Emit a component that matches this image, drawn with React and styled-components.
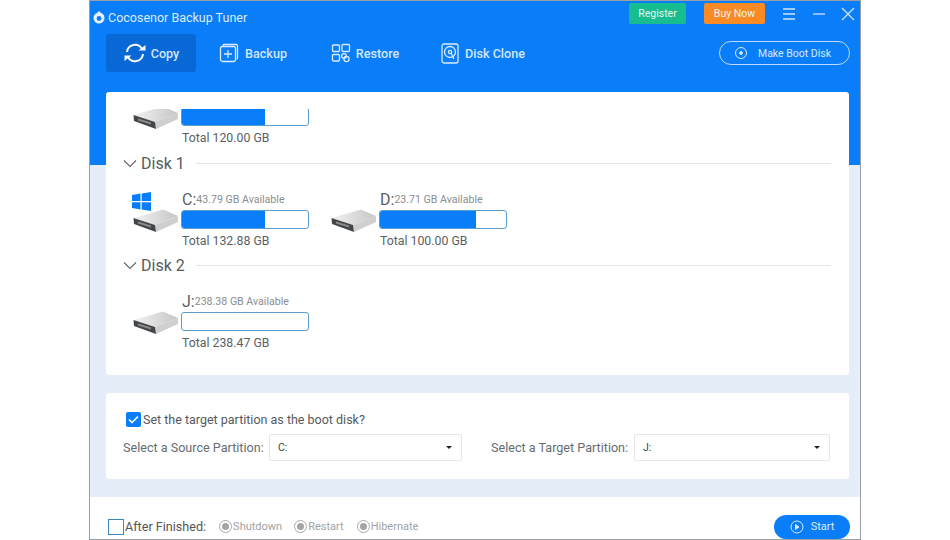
import React from "react";
import styled, { createGlobalStyle } from "styled-components";

const Global = createGlobalStyle`
  html, body { margin: 0; padding: 0; background: #fff; }
  body { width: 950px; height: 540px; overflow: hidden; font-family: Roboto, "Liberation Sans", sans-serif; }
`;
const Page = styled.div`
  width: 950px; height: 540px; padding-left: 89px; box-sizing: border-box; background: #fff;
`;
const Window = styled.div`
  width: 772px; height: 540px; box-sizing: border-box; display: flex; flex-direction: column;
  border: 1px solid #9a9fa6; background: linear-gradient(#0a7ef8 0 164px, #e5eef8 164px);
`;
const TitleBar = styled.div`
  height: 28px; display: flex; align-items: center; padding: 0 4px 3px 3px; box-sizing: border-box; color: #e9f3ff;
`;
const Brand = styled.div`
  flex: 1; display: flex; align-items: center; margin-top: 8px;
`;
const Title = styled.span`
  font-size: 12.5px; margin-left: 3px; color: #dcecff;
`;
const TopButton = styled.button`
  border: 0; border-radius: 2px; height: 21px; padding: 0; width: ${p => p.$w}px; margin-right: ${p => p.$mr}px;
  background: ${p => p.$bg}; color: #e6f5f0; font: 10.5px Roboto, sans-serif;
`;
const WinIcon = styled.svg`
  width: 16px; height: 16px; margin-left: ${p => p.$ml || 0}px; display: block; fill: none; stroke: #cfe4ff; stroke-width: 1.3;
`;
const Toolbar = styled.div`
  height: 63px; display: flex; align-items: flex-start; padding: 5px 10px 0 16px; box-sizing: border-box;
`;
const Tool = styled.div`
  height: 38px; width: ${p => p.$w}px; margin-right: ${p => p.$mr}px; display: flex; align-items: center; justify-content: center; gap: ${p => p.$gap || 5}px;
  border-radius: 3px; background: ${p => (p.$active ? "#0868d6" : "transparent")};
  color: #d3e7ff; font-size: 12.6px; font-weight: 500;
`;
const BootButton = styled.button`
  margin-left: auto; margin-top: 7px; width: 131px; height: 24px; border-radius: 12px; border: 1px solid #bcdcff;
  background: transparent; color: #d6e9ff; font: 10.5px Roboto, sans-serif; display: flex; align-items: center; justify-content: center; gap: 10px; padding: 0 4px 0 0;
`;
const Panel = styled.section`
  margin: 0 11px 0 16px; background: #fff; border-radius: 3px;
`;
const DiskPanel = styled(Panel)`
  height: 283px; padding-top: 17px; box-sizing: border-box;
`;
const DiskViewport = styled.div`
  height: 266px; overflow: hidden; padding: 0 18px 0 17px;
`;
const Clipped = styled.div`
  margin-top: -23px;
`;
const Head = styled.div`
  height: 22px; display: flex; align-items: center; margin-top: ${p => p.$mt}px; color: #555b60; font-size: 16px;
`;
const Chevron = styled.svg`
  width: 14px; height: 9px; fill: none; stroke: #666; stroke-width: 1.1; margin-right: 4px;
`;
const Rule = styled.div`
  flex: 1; height: 1px; background: #e3e6e9; margin-left: 11px;
`;
const DiskRow = styled.div`
  display: flex; margin-top: ${p => p.$mt}px; height: 60px;
`;
const Disk = styled.div`
  position: relative; width: 198px; height: 60px; display: grid; grid-template-columns: 58px 128px; grid-template-rows: 21px 19px 20px;
`;
const Drive = styled.svg`
  grid-column: 1; grid-row: 2; width: 46px; height: 24px; margin: -1px 0 0 10px; display: block;
`;
const Windows = styled.svg`
  position: absolute; left: 9px; top: 3px; width: 19px; height: 19px; fill: #0a7ef8;
`;
const Label = styled.div`
  grid-column: 2; grid-row: 1; color: #5a5f64; font-size: 16px; display: flex; align-items: center; padding-left: 1px; white-space: nowrap;
`;
const Avail = styled.span`
  font-size: 10.6px; color: #8a8d91;
`;
const Bar = styled.div`
  grid-column: 2; grid-row: 2; border: 1px solid #5a9ed0; border-radius: 3px; background: #fff; overflow: hidden; box-sizing: border-box;
`;
const Fill = styled.div`
  height: 100%; background: #0a7ef8;
`;
const Total = styled.div`
  grid-column: 2; grid-row: 3; color: #5a5f64; font-size: 12.3px; display: flex; align-items: flex-end; padding: 0 0 1px 1px;
`;
const OptionsPanel = styled(Panel)`
  margin-top: 18px; height: 86px; padding: 16px 19px 0 17px; box-sizing: border-box;
`;
const CheckRow = styled.div`
  display: flex; align-items: center; height: 20px; color: #55595d; font-size: 12.5px; padding-left: 3px;
`;
const Check = styled.span`
  width: 15px; height: 15px; border-radius: 2px; background: #0a7ef8; display: block;
`;
const CheckText = styled.span`
  margin-left: 2px;
`;
const Selects = styled.div`
  display: flex; align-items: center; margin-top: 5px; color: #686c70; font-size: 12.6px;
`;
const SelectLabel = styled.span`
  width: ${p => p.$w}px; flex: none; white-space: nowrap; margin-left: ${p => p.$ml || 0}px;
`;
const Select = styled.div`
  width: ${p => p.$w}px; height: 27px; box-sizing: border-box; border: 1px solid #e6e6e6; border-radius: 2px; display: flex; align-items: center; justify-content: space-between;
  padding: 0 9px 0 8px; color: #444; font-size: 10.5px; flex: none;
`;
const Caret = styled.span`
  width: 0; height: 0; border: 3.5px solid transparent; border-top-color: #222; border-bottom: 0;
`;
const Footer = styled.footer`
  margin-top: 18px; flex: 1; background: #fff; display: flex; align-items: center; padding: 17px 10px 0 18px; box-sizing: border-box;
  color: #555; font-size: 12.6px;
`;
const Box = styled.span`
  width: 14px; height: 14px; border: 1px solid #3f88bf; display: block; margin-right: 1px;
`;
const FinishLabel = styled.span`
  margin-right: 13px;
`;
const Radio = styled.span`
  width: 13px; height: 13px; border: 1px solid #aaa; border-radius: 50%; box-sizing: border-box; padding: 2px; display: block; margin-right: 1px;
  &::after { content: ""; display: block; width: 100%; height: 100%; border-radius: 50%; background: #a5a5a5; }
`;
const RadioText = styled.span`
  color: #a0a3a6; font-size: 11px; margin-right: ${p => p.$mr}px;
`;
const Start = styled.button`
  margin-left: auto; width: 76px; height: 24px; border: 0; border-radius: 12px; background: #0a7ef8; color: #d9ebff; font: 11px Roboto, sans-serif;
  display: flex; align-items: center; justify-content: center; gap: 7px; padding: 0;
`;

const DriveIcon = () => (
  <Drive viewBox="0 0 46 24">
    <defs>
      <linearGradient id="driveTop" x1="0" x2="1"><stop offset="0" stopColor="#f2f2f2" /><stop offset="1" stopColor="#c6c6c6" /></linearGradient>
    </defs>
    <path d="M0.5 9 L30 0.5 L45 7 L22 16Z" fill="url(#driveTop)" />
    <path d="M22 16 L45 7 L45 13 L23 23Z" fill="#cfcfcf" />
    <path d="M0.5 9 L22 16 L23 23 L1 15Z" fill="#44474a" />
    <path d="M5 12.5 L18 16.5 L18 18.5 L5 14.5Z" fill="#8a8d90" />
  </Drive>
);

const DiskItem = ({ letter, avail, pct, total, win }) => (
  <Disk>
    {win && (
      <Windows viewBox="0 0 19 19">
        <path d="M0 3 L8.5 1.6 V9 H0Z M9.7 1.4 L19 0 V9 H9.7Z M0 10.2 H8.5 V17.4 L0 16Z M9.7 10.2 H19 V19 L9.7 17.6Z" />
      </Windows>
    )}
    <DriveIcon />
    {letter && <Label>{letter}:<Avail>{avail} GB Available</Avail></Label>}
    <Bar><Fill style={{ width: `${pct}%` }} /></Bar>
    <Total>Total {total} GB</Total>
  </Disk>
);

const Chev = () => (
  <Chevron viewBox="0 0 14 9"><path d="M1 1.5 L7 7.5 L13 1.5" /></Chevron>
);

export default function App() {
  return (
    <Page>
      <Global />
      <Window>
        <TitleBar>
          <Brand>
            <svg width="12" height="13" viewBox="0 0 12 13">
              <circle cx="6" cy="7" r="5.5" fill="#e8f2ff" />
              <circle cx="6" cy="7.5" r="2.4" fill="#0a7ef8" />
              <rect x="4.6" y="0.5" width="2.8" height="4" rx="1" fill="#e8f2ff" />
            </svg>
            <Title>Cocosenor Backup Tuner</Title>
          </Brand>
          <TopButton $w={57} $mr={18} $bg="#17bd8f">Register</TopButton>
          <TopButton $w={61} $mr={16} $bg="#fa8a24">Buy Now</TopButton>
          <WinIcon viewBox="0 0 16 16"><path d="M2 3h12M2 8h12M2 13h12" /></WinIcon>
          <WinIcon viewBox="0 0 16 16" $ml={14}><path d="M2 8h12" /></WinIcon>
          <WinIcon viewBox="0 0 16 16" $ml={13}><path d="M2 2l12 12M14 2L2 14" /></WinIcon>
        </TitleBar>
        <Toolbar>
          <Tool $active $w={90} $mr={18} $gap={4}>
            <svg width="24" height="20" viewBox="0 0 24 20" fill="none" stroke="#f6faff" strokeWidth="2">
              <path d="M4 9a8 8 0 0 1 15-3M20 11a8 8 0 0 1-15 3" />
              <path d="M15.5 7.5h7V2z" fill="#f6faff" stroke="none" />
              <path d="M8.5 12.5h-7V18z" fill="#f6faff" stroke="none" />
            </svg>
            Copy
          </Tool>
          <Tool $w={78} $mr={34} $gap={6}>
            <svg width="20" height="20" viewBox="0 0 20 20" fill="none" stroke="#dcecff" strokeWidth="1.3">
              <path d="M4 3.5V2.5a1 1 0 0 1 1-1h12a1.5 1.5 0 0 1 1.5 1.5v12a1 1 0 0 1-1 1" />
              <rect x="1.5" y="3.5" width="15" height="15" rx="2" />
              <path d="M9 7v8M5 11h8" />
            </svg>
            Backup
          </Tool>
          <Tool $w={78} $mr={34}>
            <svg width="20" height="20" viewBox="0 0 20 20" fill="none" stroke="#dcecff" strokeWidth="1.3">
              <rect x="1.5" y="2" width="7" height="6.5" rx="1" />
              <rect x="11" y="1.5" width="7.5" height="7" rx="1" />
              <rect x="1.5" y="11.5" width="7" height="6.5" rx="1" />
              <circle cx="13" cy="13" r="2.4" />
              <circle cx="15.5" cy="16" r="2.6" />
            </svg>
            Restore
          </Tool>
          <Tool $w={90} $mr={0} $gap={6}>
            <svg width="18" height="21" viewBox="0 0 18 21" fill="none" stroke="#dcecff" strokeWidth="1.3">
              <rect x="1" y="1" width="16" height="19" rx="2" />
              <circle cx="9" cy="9" r="5.5" />
              <circle cx="9" cy="9" r="1.6" />
              <path d="M10 10l3 6" />
            </svg>
            Disk Clone
          </Tool>
          <BootButton>
            <svg width="14" height="14" viewBox="0 0 14 14" fill="none" stroke="#d6e9ff" strokeWidth="1">
              <circle cx="7" cy="7" r="5.5" />
              <circle cx="7" cy="7" r="1.4" fill="#d6e9ff" />
            </svg>
            Make Boot Disk
          </BootButton>
        </Toolbar>
        <DiskPanel>
          <DiskViewport>
            <Clipped>
              <DiskItem pct={66} total="120.00" />
              <Head $mt={6}><Chev />Disk 1<Rule /></Head>
              <DiskRow $mt={15}>
                <DiskItem letter="C" avail="43.79" pct={66} total="132.88" win />
                <DiskItem letter="D" avail="23.71" pct={76} total="100.00" />
              </DiskRow>
              <Head $mt={5}><Chev />Disk 2<Rule /></Head>
              <DiskRow $mt={15}>
                <DiskItem letter="J" avail="238.38" pct={0} total="238.47" />
              </DiskRow>
            </Clipped>
          </DiskViewport>
        </DiskPanel>
        <OptionsPanel>
          <CheckRow>
            <Check>
              <svg width="15" height="15" viewBox="0 0 15 15" fill="none" stroke="#fff" strokeWidth="1.6"><path d="M3 7.5l3 3 6-6" /></svg>
            </Check>
            <CheckText>Set the target partition as the boot disk?</CheckText>
          </CheckRow>
          <Selects>
            <SelectLabel $w={146}>Select a Source Partition:</SelectLabel>
            <Select $w={193}>C:<Caret /></Select>
            <SelectLabel $w={143} $ml={29}>Select a Target Partition:</SelectLabel>
            <Select $w={196}>J:<Caret /></Select>
          </Selects>
        </OptionsPanel>
        <Footer>
          <Box />
          <FinishLabel>After Finished:</FinishLabel>
          <Radio /><RadioText $mr={12}>Shutdown</RadioText>
          <Radio /><RadioText $mr={13}>Restart</RadioText>
          <Radio /><RadioText $mr={0}>Hibernate</RadioText>
          <Start>
            <svg width="14" height="14" viewBox="0 0 14 14" fill="none" stroke="#d9ebff" strokeWidth="1">
              <circle cx="7" cy="7" r="6" />
              <path d="M5.5 4.5l3.5 2.5-3.5 2.5z" fill="#d9ebff" />
            </svg>
            Start
          </Start>
        </Footer>
      </Window>
    </Page>
  );
}
